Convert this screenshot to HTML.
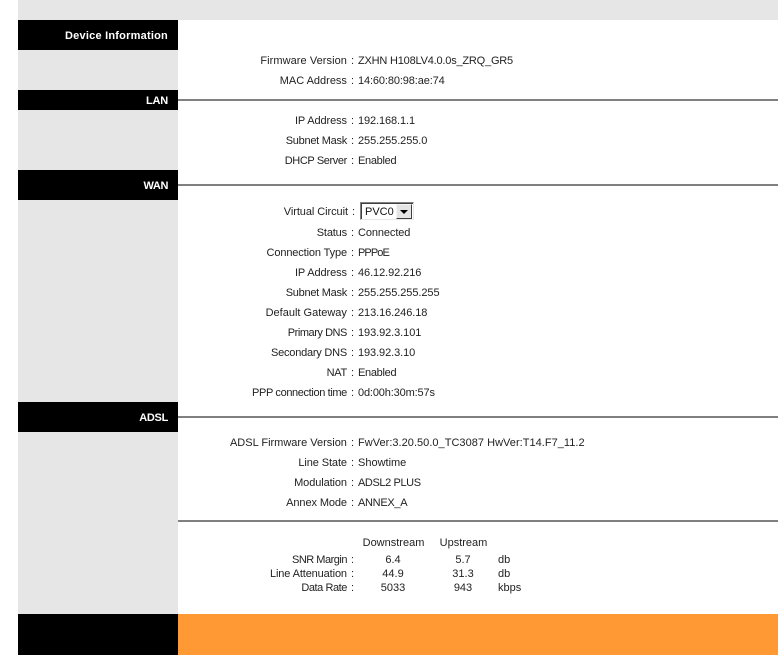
<!DOCTYPE html>
<html>
<head>
<meta charset="utf-8">
<style>
html,body{margin:0;padding:0;background:#fff;}
body{width:778px;height:655px;position:relative;overflow:hidden;font-family:"Liberation Sans",Arial,sans-serif;font-size:11px;color:#000;}
.b{position:absolute;}
.l,.v,.c{position:absolute;height:20px;line-height:20px;margin-top:1px;white-space:nowrap;}
.l{right:424px;text-align:right;color:#222;}
.l i{font-style:normal;margin-left:4px;letter-spacing:0;}
.v{left:358px;color:#222;}
.c{text-align:center;color:#222;}
.h{position:absolute;left:18px;width:150px;text-align:right;color:#fff;font-weight:bold;font-size:11px;height:20px;line-height:20px;margin-top:1px;}
.hr{position:absolute;left:178px;right:0;height:2px;background:#808080;}
.s{position:absolute;left:360px;top:202px;width:52px;height:16px;border:1px solid;border-color:#808080 #e8e8e8 #e8e8e8 #808080;box-shadow:inset 1px 1px 0 #404040;background:#fff;}
.s span{position:absolute;left:4px;top:1px;line-height:16px;color:#111;}
.s i{position:absolute;right:1px;top:1px;width:16px;height:15px;background:#e4e4e4;box-sizing:border-box;border:1px solid;border-color:#f4f4f4 #404040 #404040 #f4f4f4;}
.s i:after{content:"";position:absolute;left:3px;top:5px;border:4px solid transparent;border-top:4px solid #000;border-bottom:0;}
</style>
</head>
<body>
<div class="b" style="left:18px;top:0;width:760px;height:20px;background:#e6e6e6"></div>
<div class="b" style="left:18px;top:20px;width:160px;height:594px;background:#e6e6e6"></div>
<div class="b" style="left:18px;top:20px;width:160px;height:30px;background:#000"></div>
<div class="b" style="left:18px;top:90px;width:160px;height:20px;background:#000"></div>
<div class="b" style="left:18px;top:170px;width:160px;height:30px;background:#000"></div>
<div class="b" style="left:18px;top:402px;width:160px;height:30px;background:#000"></div>
<div class="b" style="left:18px;top:614px;width:160px;height:41px;background:#000"></div>
<div class="b" style="left:178px;top:614px;width:600px;height:41px;background:#ff9933"></div>

<div class="h" style="top:25px;letter-spacing:.22px">Device Information</div>
<div class="h" style="top:90px;letter-spacing:-.2px">LAN</div>
<div class="h" style="top:175px;letter-spacing:-.4px">WAN</div>
<div class="h" style="top:407px;letter-spacing:-.3px">ADSL</div>

<div class="hr" style="top:99px"></div>
<div class="hr" style="top:184px"></div>
<div class="hr" style="top:416px"></div>
<div class="hr" style="top:520px"></div>

<div class="l" style="top:50px;letter-spacing:.06px">Firmware Version<i>:</i></div><div class="v" style="top:50px;letter-spacing:-.2px">ZXHN H108LV4.0.0s_ZRQ_GR5</div>
<div class="l" style="top:70px">MAC Address<i>:</i></div><div class="v" style="top:70px;letter-spacing:-.12px">14:60:80:98:ae:74</div>

<div class="l" style="top:110px;letter-spacing:-.1px">IP Address<i>:</i></div><div class="v" style="top:110px;letter-spacing:-.1px">192.168.1.1</div>
<div class="l" style="top:130px;letter-spacing:-.27px">Subnet Mask<i>:</i></div><div class="v" style="top:130px;letter-spacing:-.08px">255.255.255.0</div>
<div class="l" style="top:150px;letter-spacing:-.38px">DHCP Server<i>:</i></div><div class="v" style="top:150px;letter-spacing:-.3px">Enabled</div>

<div class="l" style="top:201px;right:423px;letter-spacing:-.07px">Virtual Circuit<i>:</i></div>
<div class="s"><span>PVC0</span><i></i></div>
<div class="l" style="top:222px;letter-spacing:-.17px">Status<i>:</i></div><div class="v" style="top:222px;letter-spacing:-.1px">Connected</div>
<div class="l" style="top:242px;letter-spacing:-.13px">Connection Type<i>:</i></div><div class="v" style="top:242px;letter-spacing:-.9px">PPPoE</div>
<div class="l" style="top:262px;letter-spacing:-.1px">IP Address<i>:</i></div><div class="v" style="top:262px;letter-spacing:-.08px">46.12.92.216</div>
<div class="l" style="top:282px;letter-spacing:-.27px">Subnet Mask<i>:</i></div><div class="v" style="top:282px;letter-spacing:-.07px">255.255.255.255</div>
<div class="l" style="top:302px">Default Gateway<i>:</i></div><div class="v" style="top:302px;letter-spacing:-.08px">213.16.246.18</div>
<div class="l" style="top:322px;letter-spacing:-.45px">Primary DNS<i>:</i></div><div class="v" style="top:322px;letter-spacing:-.08px">193.92.3.101</div>
<div class="l" style="top:342px;letter-spacing:-.23px">Secondary DNS<i>:</i></div><div class="v" style="top:342px;letter-spacing:-.09px">193.92.3.10</div>
<div class="l" style="top:362px;letter-spacing:-.3px">NAT<i>:</i></div><div class="v" style="top:362px;letter-spacing:-.3px">Enabled</div>
<div class="l" style="top:382px;letter-spacing:-.37px">PPP connection time<i>:</i></div><div class="v" style="top:382px;letter-spacing:-.15px">0d:00h:30m:57s</div>

<div class="l" style="top:432px">ADSL Firmware Version<i>:</i></div><div class="v" style="top:432px;letter-spacing:.03px">FwVer:3.20.50.0_TC3087 HwVer:T14.F7_11.2</div>
<div class="l" style="top:452px;letter-spacing:-.1px">Line State<i>:</i></div><div class="v" style="top:452px">Showtime</div>
<div class="l" style="top:472px;letter-spacing:-.1px">Modulation<i>:</i></div><div class="v" style="top:472px;letter-spacing:-.4px">ADSL2 PLUS</div>
<div class="l" style="top:492px;letter-spacing:-.1px">Annex Mode<i>:</i></div><div class="v" style="top:492px;letter-spacing:-.3px">ANNEX_A</div>

<div class="c" style="left:353.5px;width:80px;top:532px">Downstream</div>
<div class="c" style="left:423.5px;width:80px;top:532px">Upstream</div>

<div class="l" style="top:549px;letter-spacing:-.5px">SNR Margin<i>:</i></div>
<div class="c" style="left:353px;width:80px;top:549px">6.4</div>
<div class="c" style="left:423px;width:80px;top:549px">5.7</div>
<div class="v" style="left:498px;top:549px">db</div>

<div class="l" style="top:563px;letter-spacing:-.12px">Line Attenuation<i>:</i></div>
<div class="c" style="left:353px;width:80px;top:563px">44.9</div>
<div class="c" style="left:423px;width:80px;top:563px">31.3</div>
<div class="v" style="left:498px;top:563px">db</div>

<div class="l" style="top:577px;letter-spacing:-.44px">Data Rate<i>:</i></div>
<div class="c" style="left:353px;width:80px;top:577px">5033</div>
<div class="c" style="left:423px;width:80px;top:577px">943</div>
<div class="v" style="left:498px;top:577px">kbps</div>
</body>
</html>
